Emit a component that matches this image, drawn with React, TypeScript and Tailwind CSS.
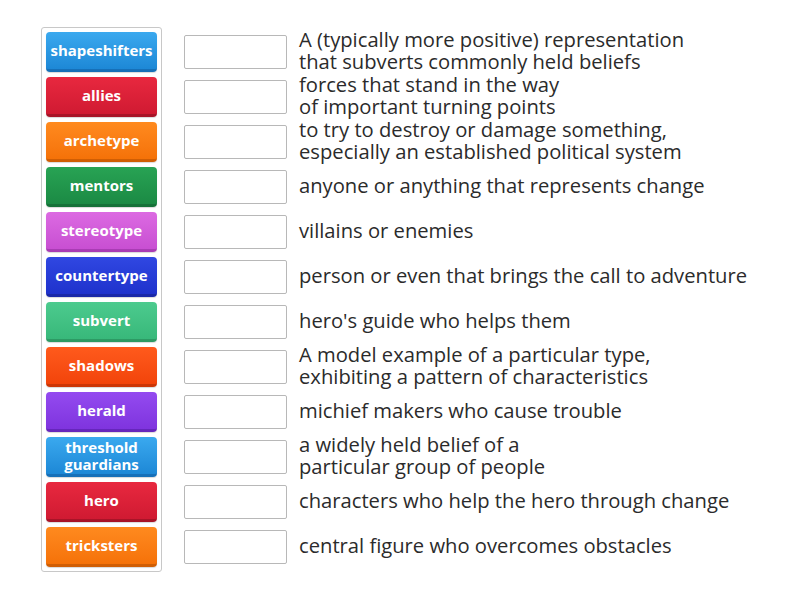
const cards = [
  { label: "shapeshifters", bg: "bg-gradient-to-b from-[#3aa9ef] to-[#1d88d6]", edge: "border-[#1670b8]" },
  { label: "allies", bg: "bg-gradient-to-b from-[#e8283f] to-[#d01a32]", edge: "border-[#a81428]" },
  { label: "archetype", bg: "bg-gradient-to-b from-[#ff8a1e] to-[#f57208]", edge: "border-[#d05e04]" },
  { label: "mentors", bg: "bg-gradient-to-b from-[#28a354] to-[#1b8a44]", edge: "border-[#157238]" },
  { label: "stereotype", bg: "bg-gradient-to-b from-[#dc6ae2] to-[#c84fd2]", edge: "border-[#a93cb4]" },
  { label: "countertype", bg: "bg-gradient-to-b from-[#3047e2] to-[#1f32cc]", edge: "border-[#1a28a8]" },
  { label: "subvert", bg: "bg-gradient-to-b from-[#4ccb8e] to-[#38b87a]", edge: "border-[#2d9a64]" },
  { label: "shadows", bg: "bg-gradient-to-b from-[#ff5a1c] to-[#f2440a]", edge: "border-[#cc3606]" },
  { label: "herald", bg: "bg-gradient-to-b from-[#944af0] to-[#7f34de]", edge: "border-[#6626bc]" },
  { label: "threshold guardians", bg: "bg-gradient-to-b from-[#3aa9ef] to-[#1d88d6]", edge: "border-[#1670b8]" },
  { label: "hero", bg: "bg-gradient-to-b from-[#e8283f] to-[#d01a32]", edge: "border-[#a81428]" },
  { label: "tricksters", bg: "bg-gradient-to-b from-[#ff8a1e] to-[#f57208]", edge: "border-[#d05e04]" },
];

const definitions = [
  ["A (typically more positive) representation", "that subverts commonly held beliefs"],
  ["forces that stand in the way", "of important turning points"],
  ["to try to destroy or damage something,", "especially an established political system"],
  ["anyone or anything that represents change"],
  ["villains or enemies"],
  ["person or even that brings the call to adventure"],
  ["hero's guide who helps them"],
  ["A model example of a particular type,", "exhibiting a pattern of characteristics"],
  ["michief makers who cause trouble"],
  ["a widely held belief of a", "particular group of people"],
  ["characters who help the hero through change"],
  ["central figure who overcomes obstacles"],
];

export default function App() {
  return (
    <div className="w-[800px] h-[600px] bg-white font-['Open_Sans',sans-serif] pt-[27px] pl-[41px] flex">
      {/* word tiles */}
      <div className="w-[121px] self-start border border-[#c8c8c8] rounded-[3px] p-[4px] flex flex-col gap-[5px]">
        {cards.map((c) => (
          <div
            key={c.label}
            className={`h-[40px] rounded-[4px] border-b-[3px] ${c.bg} ${c.edge} shadow-[0_1px_1px_rgba(0,0,0,0.15)] flex items-center justify-center text-center text-white font-bold text-[15px] leading-[17px] px-1`}
          >
            {c.label}
          </div>
        ))}
      </div>

      {/* drop targets with their definitions */}
      <div className="ml-[22px] pt-[5px] flex flex-col gap-[5px]">
        {definitions.map((lines, i) => (
          <div key={i} className="h-[40px] flex items-center">
            <div className="w-[103px] h-[34px] border border-[#b8b8b8] rounded-[2px] bg-white shrink-0" />
            <div className="ml-[12px] -mt-[5px] text-[20.2px] leading-[22px] text-[#2b2b2b] whitespace-nowrap">
              {lines.map((l, j) => (
                <div key={j}>{l}</div>
              ))}
            </div>
          </div>
        ))}
      </div>
    </div>
  );
}
